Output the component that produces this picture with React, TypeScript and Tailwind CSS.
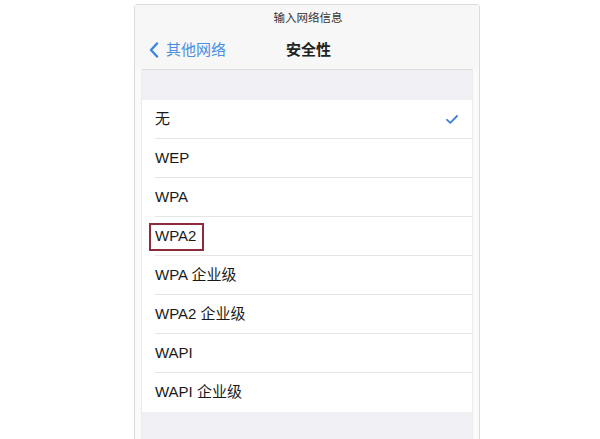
import React from "react";

const rows = ["无", "WEP", "WPA", "WPA2", "WPA 企业级", "WPA2 企业级", "WAPI", "WAPI 企业级"];

export default function App() {
  return (
    <div
      className="w-[600px] h-[439px] bg-white overflow-hidden pt-[4px] pl-[134px]"
      style={{ fontFamily: '"Liberation Sans", "Noto Sans CJK SC", sans-serif' }}
    >
      <div className="w-[346px] h-[440px] border border-[#dcdcdc] rounded-t-[3px] bg-[#fafafa] flex flex-col">
        <div className="h-[64px] bg-[#f7f7f7] flex flex-col">
          <div className="h-[27px] flex items-center justify-center text-[11.5px] text-[#333] pl-[2px]">
            输入网络信息
          </div>
          <div className="relative h-[37px] flex items-center justify-center">
            <div className="absolute left-[14px] top-[7px] flex items-center text-[15px] text-[#4a8ee0]">
              <svg width="10" height="16" viewBox="0 0 10 16" className="mr-[7px]">
                <path d="M8 1.5 L2 8 L8 14.5" fill="none" stroke="#3d86e0" strokeWidth="2.4" strokeLinecap="round" strokeLinejoin="round" />
              </svg>
              <span>其他网络</span>
            </div>
            <span className="text-[15px] font-bold text-[#222] ml-[3px] mt-[-1px]">安全性</span>
          </div>
        </div>
        <div className="flex-1 px-[6px] flex flex-col">
          <div className="flex-1 flex flex-col border-x border-[#ececec]">
            <div className="h-[31px] bg-[#efeff4] border-t border-[#dddddd]" />
            <div className="bg-white flex flex-col">
              {rows.map((r, i) => (
                <div key={r} className="pl-[13px] h-[39px]">
                  <div
                    className={
                      "h-full flex items-center pr-[13px] text-[15px] text-[#1a1a1a] " +
                      (i < rows.length - 1 ? "border-b border-[#e6e6e6]" : "")
                    }
                  >
                    {r === "WPA2" ? (
                      <span className="ml-[-6px] mt-[1px] px-[4px] h-[28px] w-[55px] flex items-center border-2 border-[#8e2b3a]">
                        {r}
                      </span>
                    ) : (
                      <span>{r}</span>
                    )}
                    {i === 0 && (
                      <svg width="12" height="9" viewBox="0 0 12 9" className="ml-auto mr-[1px]">
                        <path d="M1 4.8 L4.3 7.8 L11 1" fill="none" stroke="#3d7fd6" strokeWidth="1.8" strokeLinecap="round" strokeLinejoin="round" />
                      </svg>
                    )}
                  </div>
                </div>
              ))}
            </div>
            <div className="flex-1 bg-[#efeff4]" />
          </div>
        </div>
      </div>
    </div>
  );
}
